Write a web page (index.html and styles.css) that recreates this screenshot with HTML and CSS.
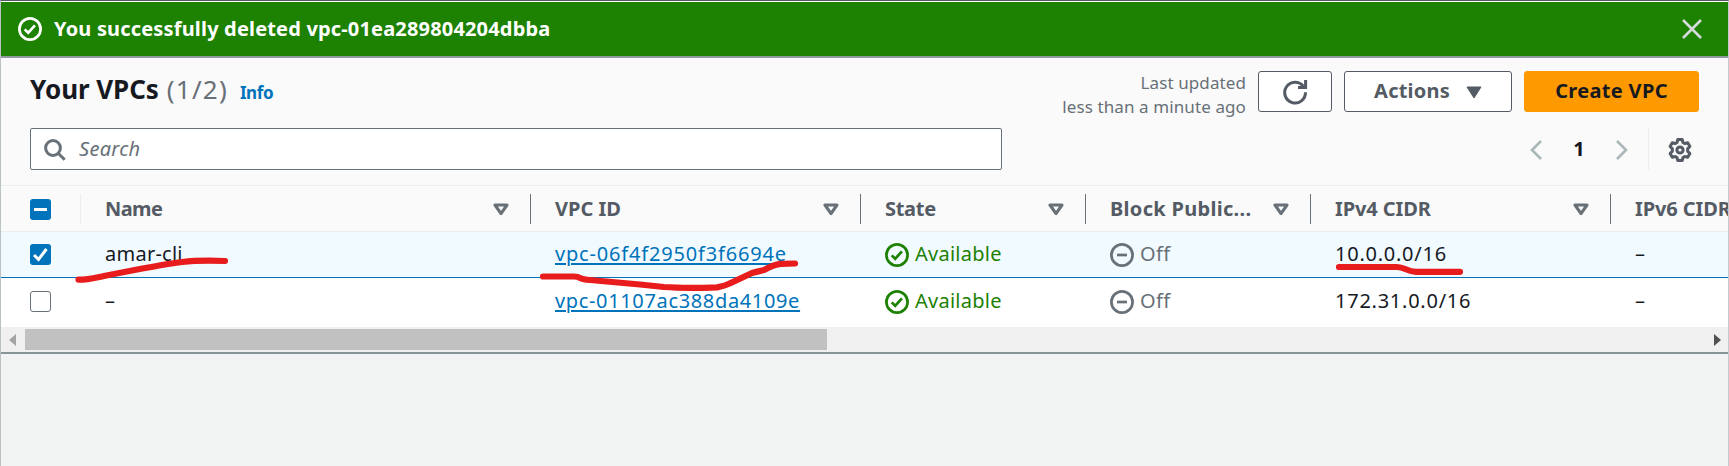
FILE: index.html
```html
<!DOCTYPE html>
<html lang="en">
<head>
<meta charset="utf-8">
<title>Your VPCs</title>
<link rel="stylesheet" href="styles.css">
</head>
<body>
<svg class="defs" aria-hidden="true">
  <symbol id="ok" viewBox="0 0 24 24"><circle cx="12" cy="12" r="10.6" fill="none" stroke="currentColor" stroke-width="2.7"/><path d="M6.7 12.4l3.5 3.4 6.7-7.5" fill="none" stroke="currentColor" stroke-width="2.7"/></symbol>
  <symbol id="off" viewBox="0 0 24 24"><circle cx="12" cy="12" r="10.6" fill="none" stroke="currentColor" stroke-width="2.7"/><path d="M7 12h10" stroke="currentColor" stroke-width="2.7"/></symbol>
  <symbol id="sort" viewBox="0 0 16 13"><path d="M2 2h12L8 10.6z" fill="none" stroke="currentColor" stroke-width="3.1" stroke-linejoin="round"/></symbol>
</svg>
<div class="page">
  <div class="banner">
    <svg class="icon"><use href="#ok"/></svg>
    <span class="banner-text">You successfully deleted vpc-01ea289804204dbba</span>
    <svg class="close" viewBox="0 0 20 20"><path d="M1 1l18 18M19 1L1 19" stroke="currentColor" stroke-width="2.6"/></svg>
  </div>
  <main class="panel">
    <div class="heading">
      <h1 class="title">Your VPCs</h1><span class="count">(1/2)</span><a class="info">Info</a>
      <div class="updated"><span>Last updated</span><span>less than a minute ago</span></div>
      <button class="btn refresh"><svg class="icon" viewBox="0 0 24 24" fill="none" stroke="currentColor" stroke-width="3"><path d="M20.3 6.2A10.4 10.4 0 1 0 22.5 12.3M15 7.4h7.6V0"/></svg></button>
      <button class="btn actions">Actions<svg class="caret" viewBox="0 0 16 13"><path d="M1 1h14L8 12z" fill="currentColor" stroke="currentColor" stroke-linejoin="round"/></svg></button>
      <button class="btn create">Create VPC</button>
    </div>
    <div class="tools">
      <div class="search"><svg class="glass" viewBox="0 0 22 22" fill="none" stroke="currentColor" stroke-width="3"><circle cx="9" cy="9" r="7.4"/><path d="M14.2 14.2l6.5 6.5"/></svg><span>Search</span></div>
      <div class="pager">
        <svg class="chev" viewBox="0 0 12 20"><path d="M11 1L2 10l9 9" fill="none" stroke="currentColor" stroke-width="2.6"/></svg>
        <b class="num">1</b>
        <svg class="chev" viewBox="0 0 12 20"><path d="M1 1l9 9-9 9" fill="none" stroke="currentColor" stroke-width="2.6"/></svg>
      </div>
      <div class="prefs"><svg class="icon" viewBox="0 0 24 24" fill="none" stroke="currentColor" stroke-width="3" stroke-linejoin="round"><path d="M9.8 1.5h4.4l.8 3 1.7 1 3-.8 2.2 3.8-2.2 2.1v2.8l2.2 2.1-2.2 3.8-3-.8-1.7 1-.8 3H9.800l-.8-3-1.700-1-3 .8-2.200-3.800 2.200-2.100v-2.800L2.100 8.500l2.200-3.800 3 .8 1.700-1z"/><circle cx="12" cy="12" r="3.100"/></svg></div>
    </div>
    <div class="row head">
      <div class="cell check"><span class="box on"><svg viewBox="0 0 21 21"><path d="M4 10.500h13" stroke="#fff" stroke-width="3"/></svg></span></div>
      <div class="cell"><span class="n">Name</span><svg class="sort"><use href="#sort"/></svg></div>
      <div class="cell"><span>VPC ID</span><svg class="sort"><use href="#sort"/></svg></div>
      <div class="cell"><span class="s">State</span><svg class="sort"><use href="#sort"/></svg></div>
      <div class="cell"><span class="b">Block Public...</span><svg class="sort"><use href="#sort"/></svg></div>
      <div class="cell"><span class="v">IPv4 CIDR</span><svg class="sort"><use href="#sort"/></svg></div>
      <div class="cell"><span class="v">IPv6 CIDR</span></div>
    </div>
    <div class="row selected">
      <div class="cell check"><span class="box on"><svg viewBox="0 0 21 21"><path d="M4 11l4.500 4.500L16.500 5" fill="none" stroke="#fff" stroke-width="3"/></svg></span></div>
      <div class="cell"><span class="text">amar-cli</span></div>
      <div class="cell"><a class="link first">vpc-06f4f2950f3f6694e</a></div>
      <div class="cell ok"><svg class="icon"><use href="#ok"/></svg><span class="text">Available</span></div>
      <div class="cell off"><svg class="icon"><use href="#off"/></svg><span class="text">Off</span></div>
      <div class="cell"><span class="text cidr">10.0.0.0/16</span></div>
      <div class="cell"><span class="text">–</span></div>
    </div>
    <div class="row last">
      <div class="cell check"><span class="box"></span></div>
      <div class="cell"><span class="text">–</span></div>
      <div class="cell"><a class="link">vpc-01107ac388da4109e</a></div>
      <div class="cell ok"><svg class="icon"><use href="#ok"/></svg><span class="text">Available</span></div>
      <div class="cell off"><svg class="icon"><use href="#off"/></svg><span class="text">Off</span></div>
      <div class="cell"><span class="text cidr">172.31.0.0/16</span></div>
      <div class="cell"><span class="text">–</span></div>
    </div>
    <div class="scroll">
      <svg class="arrow left" viewBox="0 0 7 12"><path d="M7 0v12L0 6z" fill="currentColor"/></svg>
      <div class="thumb"></div>
      <svg class="arrow right" viewBox="0 0 7 12"><path d="M0 0v12l7-6z" fill="currentColor"/></svg>
    </div>
  </main>
  <svg class="marks" viewBox="0 0 1729 466" fill="none" stroke="#e81c1c" stroke-width="6.200" stroke-linecap="round" stroke-linejoin="round">
    <path d="M78.500 279.700C86 280 94 278 104 276C134 270 165 264 182 262C197 260.300 210 260.500 225 261"/>
    <path d="M543 276.500H574Q578 276.500 580 278Q583 279.500 590 280L640 284.500L664 287Q685 288.500 717 287.300Q724 286.500 735 281L752 273Q757 271.500 764 270Q775 264 781 263.800L795 263.500"/>
    <path d="M1339 267H1397C1405 267 1407 271.800 1416 271.800H1460"/>
  </svg>
</div>
</body>
</html>
```

FILE: styles.css
```css
* { box-sizing: border-box; }
body {
  margin: 0;
  background: #f2f3f3;
  font: 20px/26px "Noto Sans", "Open Sans", sans-serif;
  color: #16191f;
}
.defs { display: none; }
.page {
  position: relative;
  width: 1729px;
  height: 466px;
  overflow: hidden;
  border-top: 1px solid #545b64;
  border-left: 1px solid #b9c1c5;
  border-right: 1px solid #c4cbce;
}
.icon { width: 24px; height: 24px; flex: none; overflow: visible; }
.banner {
  height: 57px;
  display: flex;
  align-items: center;
  border-top: 1px solid #fff;
  border-bottom: 2px solid #8f9a9d;
  background: #1d8102;
  color: #fff;
  padding: 0 26px 0 18px;
  margin-left: -1px;
}
.banner-text { font-weight: 700; letter-spacing: .17px; margin: 0 auto 0 12px; }
.close { width: 20px; height: 20px; color: #d5dbdb; }
.panel { background: #fafafa; height: 296px; border-bottom: 2px solid #879596; }
.heading { display: flex; height: 70px; padding: 13px 29px 0 29px; align-items: flex-start; }
.title { margin: 0; font-size: 26px; line-height: 36px; letter-spacing: -.05px; }
.count { margin: 0 0 0 8px; font-size: 26px; line-height: 36px; letter-spacing: 1.2px; color: #687078; }
.info { margin: 9px 0 0 12px; font-size: 17px; font-weight: 700; letter-spacing: -.4px; color: #0073bb; }
.updated {
  display: flex;
  flex-direction: column;
  align-items: flex-end;
  margin: 0 12px 0 auto;
  font-size: 17px;
  line-height: 24px;
  letter-spacing: .1px;
  color: #687078;
}
.btn {
  display: flex;
  align-items: center;
  justify-content: center;
  height: 41px;
  padding: 0 0 2px;
  border: 1px solid #545b64;
  border-radius: 3px;
  background: #fff;
  color: #545b64;
  font: 700 20px/26px "Noto Sans", "Open Sans", sans-serif;
}
.refresh { width: 74px; padding: 0; margin-right: 12px; }
.actions { width: 168px; margin-right: 12px; letter-spacing: .2px; }
.caret { width: 16px; height: 13px; margin: 3px 0 0 16px; }
.create { width: 175px; border-color: #f90; background: #f90; color: #16191f; letter-spacing: .33px; }
.tools { display: flex; height: 57px; padding: 0 36px 0 29px; align-items: flex-start; }
.search {
  display: flex;
  align-items: center;
  width: 972px;
  height: 42px;
  padding-left: 13px;
  border: 1px solid #687078;
  border-radius: 2px;
  background: #fff;
  color: #687078;
  font-style: italic;
  letter-spacing: .3px;
}
.search span { margin: 0 0 0 13px; }
.glass { width: 22px; height: 22px; margin-top: 2px; }
.pager { display: flex; align-items: center; gap: 31px; height: 44px; margin-left: auto; color: #aab7b8; }
.chev { width: 12px; height: 20px; }
.num { width: 12px; margin: -2px 0 0; color: #16191f; text-align: center; }
.prefs { display: flex; align-items: center; height: 41px; margin: 1px 0 0 20px; padding-left: 19px; border-left: 1px solid #eaeded; color: #545b64; }
.row { display: grid; grid-template-columns: 80px 450px 330px 225px 225px 300px 117px; }
.cell { display: flex; align-items: center; padding-left: 24px; white-space: nowrap; overflow: hidden; }
.head {
  height: 47px;
  border-top: 1px solid #eaeded;
  border-bottom: 1px solid #eaeded;
  color: #545b64;
  font-weight: 700;
}
.head .cell { height: 30px; margin-top: 8px; border-right: 1px solid #687078; }
.head .check { border-color: #eaeded; }
.head .cell:last-child { border: 0; }
.head span:not(.box) { margin-top: -1px; }
.n { letter-spacing: -.6px; }
.s { letter-spacing: -.3px; }
.b { letter-spacing: .3px; }
.v { letter-spacing: -.1px; }
.sort { width: 16px; height: 13px; margin: 0 21px 0 auto; color: #687078; }
.check { padding-left: 29px; }
.box { width: 21px; height: 21px; border: 1.5px solid #687078; border-radius: 3px; background: #fff; }
.box.on { border: 0; background: #0073bb; }
.box svg { display: block; width: 21px; height: 21px; }
.selected { height: 46px; margin-left: -1px; border-left: 1px solid #0073bb; border-bottom: 1px solid #0073bb; background: #f1faff; }
.last { height: 49px; padding-bottom: 2px; background: #fff; }
.text { letter-spacing: .25px; margin-top: -2px; }
.link { letter-spacing: .65px; margin-top: -2px; color: #0073bb; text-decoration: underline 2px; text-underline-offset: 2px; text-decoration-skip-ink: auto; }
.link.first { letter-spacing: .82px; }
.cidr { letter-spacing: .75px; }
.ok { color: #1d8102; }
.off { color: #687078; }
.cell .icon { margin-right: 6px; }
.off .text { letter-spacing: .4px; }
.scroll { display: flex; align-items: center; height: 25px; padding: 0 7px 0 8px; background: #f0f0f0; }
.arrow { width: 7px; height: 12px; color: #a3a3a3; }
.thumb { width: 802px; height: 21px; margin-left: 9px; background: #c1c1c1; }
.right { margin-left: auto; color: #505050; }
.marks { position: absolute; left: -1px; top: -1px; width: 1729px; height: 466px; pointer-events: none; }
```
